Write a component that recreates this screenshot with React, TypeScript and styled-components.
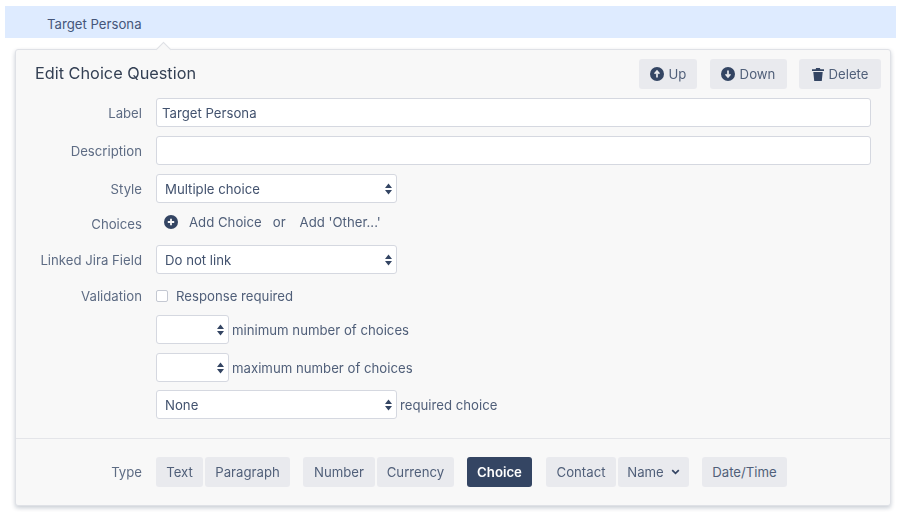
import React from "react";
import styled, { createGlobalStyle } from "styled-components";

const Global = createGlobalStyle`
  html, body { margin: 0; padding: 0; background: #fff; }
  body { font-family: Inter, "Liberation Sans", sans-serif; font-size: 13.2px; color: #42526e; }
`;

const Page = styled.div`
  width: 900px;
  height: 514px;
  padding: 6px 4px 0 5px;
  box-sizing: border-box;
  overflow: hidden;
  filter: blur(0.3px);
`;

const Bar = styled.div`
  height: 32px;
  box-sizing: border-box;
  background: #deebff;
  padding: 4px 0 0 42px;
  display: flex;
  align-items: center;
  color: #45567a;
`;

const Panel = styled.section`
  position: relative;
  margin: 11px 5px 0 10px;
  height: 457px;
  box-sizing: border-box;
  background: #f8f8f8;
  border: 1px solid #dfe1e6;
  border-radius: 3px;
  box-shadow: 0 2px 4px rgba(9, 30, 66, 0.22);
  padding-top: 9px;
  &::before {
    content: "";
    position: absolute;
    left: 142px;
    top: -6px;
    width: 10px;
    height: 10px;
    background: #f8f8f8;
    border-top: 1px solid #dfe1e6;
    border-left: 1px solid #dfe1e6;
    transform: rotate(45deg);
  }
`;

const Head = styled.div`
  display: flex;
  align-items: center;
  padding: 0 9px 0 19px;
  height: 30px;
`;

const Title = styled.h2`
  margin: -2px 0 0;
  flex: 1;
  font-size: 16.3px;
  font-weight: 400;
  color: #344054;
`;

const ActionGroup = styled.div`
  display: flex;
  gap: 12.5px;
`;

const Button = styled.button<{ $w: number; $selected?: boolean; $gap?: number }>`
  width: ${(p) => p.$w}px;
  height: 30px;
  padding: 0;
  border: 0;
  border-radius: 3px;
  background: ${(p) => (p.$selected ? "#344563" : "#e9eaee")};
  color: ${(p) => (p.$selected ? "#fff" : "#505f79")};
  font: inherit;
  font-weight: ${(p) => (p.$selected ? 600 : 400)};
  display: inline-flex;
  align-items: center;
  justify-content: center;
  gap: ${(p) => p.$gap ?? 5}px;
`;

const Form = styled.div`
  padding-top: 9px;
`;

const Row = styled.div<{ $h: number; $gap?: number }>`
  display: flex;
  align-items: center;
  height: ${(p) => p.$h}px;
  margin-bottom: ${(p) => p.$gap ?? 9}px;
`;

const Label = styled.div`
  width: 126px;
  flex: none;
  text-align: right;
  color: #5e6c84;
  margin-right: 14px;
`;

const Content = styled.div`
  display: flex;
  align-items: center;
  flex: 1;
  min-width: 0;
  color: #505f79;
`;

const Input = styled.div`
  width: 715px;
  height: 29px;
  box-sizing: border-box;
  background: #fff;
  border: 1px solid #d5d8e0;
  border-radius: 3px;
  padding-left: 5px;
  display: flex;
  align-items: center;
  color: #42526e;
`;

const Select = styled.div<{ $w: number }>`
  width: ${(p) => p.$w}px;
  height: 29px;
  flex: none;
  box-sizing: border-box;
  background: #fff;
  border: 1px solid #d5d8e0;
  border-radius: 3px;
  padding: 0 3px 0 8px;
  display: flex;
  align-items: center;
  justify-content: space-between;
  color: #42526e;
`;

const After = styled.span`
  margin-left: 3px;
`;

const AddIcon = styled.span`
  display: inline-flex;
  margin: 0 11px 4px 8px;
`;

const Link = styled.span<{ $l?: number }>`
  margin-left: ${(p) => p.$l ?? 0}px;
  margin-bottom: 4px;
`;

const Check = styled.span`
  width: 10px;
  height: 10px;
  background: #fff;
  border: 1px solid #c4c8d2;
  border-radius: 2px;
  margin-right: 8px;
`;

const Divider = styled.hr`
  margin: 19px 0 18px;
  border: 0;
  border-top: 1px solid #e4e5e9;
`;

const TypeRow = styled.div`
  display: flex;
  align-items: center;
`;

const TypeGroup = styled.div<{ $after?: number }>`
  display: flex;
  gap: 2px;
  margin-right: ${(p) => p.$after ?? 13}px;
`;

const Stepper = () => (
  <svg width="9" height="14" viewBox="0 0 9 14" fill="#344563">
    <path d="M4.5 1.5 8 6H1zM1 8h7l-3.5 4.5z" />
  </svg>
);

const CircleArrow = ({ down }: { down?: boolean }) => (
  <svg width="14" height="14" viewBox="0 0 14 14">
    <circle cx="7" cy="7" r="7" fill="#344563" />
    <path
      d={down ? "M7 3.5v6M4.6 7.2 7 10l2.4-2.8" : "M7 10.5v-6M4.6 6.8 7 4l2.4 2.8"}
      stroke="#e9eaee"
      strokeWidth="1.7"
      fill="none"
    />
  </svg>
);

const Trash = () => (
  <svg width="12" height="13" viewBox="0 0 13 14" fill="#344563">
    <path d="M4.5 0h4l.6 1.4H13v1.8H0V1.4h3.9zM1.4 4.3h10.2L10.6 14H2.4z" />
  </svg>
);

const Plus = () => (
  <svg width="14" height="14" viewBox="0 0 14 14">
    <circle cx="7" cy="7" r="7" fill="#344563" />
    <path d="M7 3.8v6.4M3.8 7h6.4" stroke="#f8f8f8" strokeWidth="1.8" />
  </svg>
);

const Chevron = () => (
  <svg width="9" height="6" viewBox="0 0 9 6" fill="none">
    <path d="M1.2 1.2 4.5 4.4l3.3-3.2" stroke="#344563" strokeWidth="1.7" />
  </svg>
);

export default function App() {
  return (
    <Page>
      <Global />
      <Bar>Target Persona</Bar>
      <Panel>
        <Head>
          <Title>Edit Choice Question</Title>
          <ActionGroup>
            <Button $w={58}><CircleArrow />Up</Button>
            <Button $w={77}><CircleArrow down />Down</Button>
            <Button $w={82}><Trash />Delete</Button>
          </ActionGroup>
        </Head>
        <Form>
          <Row $h={29}>
            <Label>Label</Label>
            <Content><Input>Target Persona</Input></Content>
          </Row>
          <Row $h={29}>
            <Label>Description</Label>
            <Content><Input /></Content>
          </Row>
          <Row $h={29} $gap={11}>
            <Label>Style</Label>
            <Content><Select $w={241}>Multiple choice<Stepper /></Select></Content>
          </Row>
          <Row $h={20} $gap={11}>
            <Label>Choices</Label>
            <Content>
              <AddIcon><Plus /></AddIcon>
              <Link>Add Choice</Link>
              <Link $l={11}>or</Link>
              <Link $l={14}>Add 'Other...'</Link>
            </Content>
          </Row>
          <Row $h={29} $gap={12}>
            <Label>Linked Jira Field</Label>
            <Content><Select $w={241}>Do not link<Stepper /></Select></Content>
          </Row>
          <Row $h={20} $gap={9}>
            <Label>Validation</Label>
            <Content><Check />Response required</Content>
          </Row>
          <Row $h={29}>
            <Label />
            <Content><Select $w={73}><span /><Stepper /></Select><After>minimum number of choices</After></Content>
          </Row>
          <Row $h={29} $gap={8}>
            <Label />
            <Content><Select $w={73}><span /><Stepper /></Select><After>maximum number of choices</After></Content>
          </Row>
          <Row $h={29} $gap={0}>
            <Label />
            <Content><Select $w={241}>None<Stepper /></Select><After>required choice</After></Content>
          </Row>
        </Form>
        <Divider />
        <TypeRow>
          <Label>Type</Label>
          <TypeGroup>
            <Button $w={47}>Text</Button>
            <Button $w={85}>Paragraph</Button>
          </TypeGroup>
          <TypeGroup>
            <Button $w={72}>Number</Button>
            <Button $w={77}>Currency</Button>
          </TypeGroup>
          <TypeGroup $after={14}>
            <Button $w={65} $selected>Choice</Button>
          </TypeGroup>
          <TypeGroup>
            <Button $w={70}>Contact</Button>
            <Button $w={71} $gap={7}>Name<Chevron /></Button>
          </TypeGroup>
          <TypeGroup>
            <Button $w={85}>Date/Time</Button>
          </TypeGroup>
        </TypeRow>
      </Panel>
    </Page>
  );
}
